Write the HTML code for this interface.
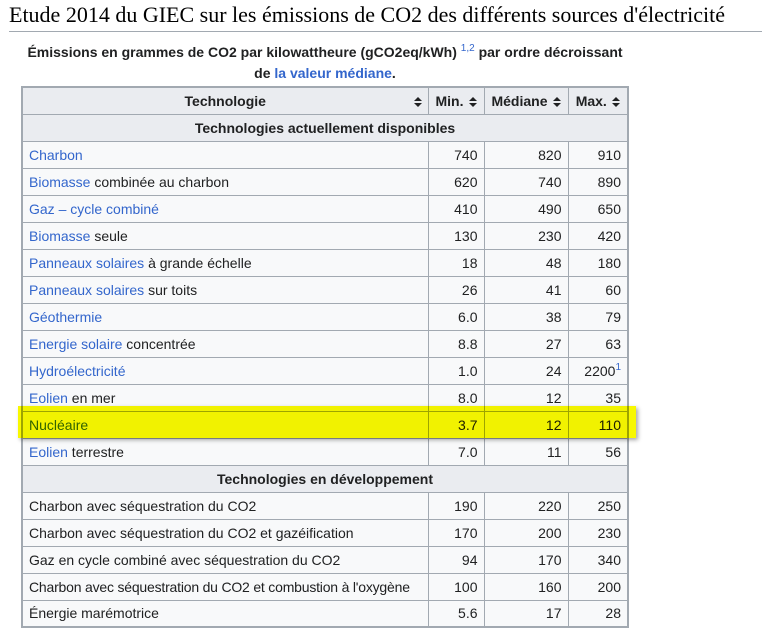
<!DOCTYPE html>
<html><head><meta charset="utf-8"><style>
body{margin:0;width:762px;height:635px;background:#fff;position:relative;overflow:hidden;font-family:"Liberation Sans",sans-serif;color:#202122}
h1{position:absolute;left:9px;top:0;margin:0;font:400 22px/30px "Liberation Serif",serif;color:#000;width:753px;border-bottom:1px solid #a2a9b1;height:31px;white-space:nowrap}
.cap{position:absolute;left:0;width:650px;text-align:center;font-weight:bold;font-size:14px;color:#202122;white-space:nowrap}
a,.l{color:#3366cc;text-decoration:none}
sup{font-size:10px;font-weight:normal;color:#3366cc;vertical-align:6px}
table{position:absolute;left:21px;top:86px;border-collapse:collapse;border:2px solid #a2a9b1;background:#f8f9fa;font-size:14px;table-layout:fixed;width:606px}
td,th{border:1px solid #a2a9b1;height:27px;padding:0 6px;box-sizing:border-box;white-space:nowrap;overflow:hidden}
th{background:#eaecf0;font-weight:bold}
td.n{text-align:right}
.ar{display:inline-block;vertical-align:middle;margin-left:5px}
.hl{position:absolute;left:18px;top:406px;width:618px;height:32px;background:#f8f800;mix-blend-mode:multiply;box-shadow:2px 2px 4px rgba(0,0,0,.35)}
</style></head><body>
<h1>Etude 2014 du GIEC sur les émissions de CO2 des différents sources d'électricité</h1>
<div class="cap" style="top:43px">Émissions en grammes de CO2 par kilowattheure (gCO2eq/kWh) <sup>1,2</sup> par ordre décroissant</div>
<div class="cap" style="top:65px">de <span class="l">la valeur médiane</span>.</div>
<table>
<colgroup><col style="width:406px"><col style="width:56px"><col style="width:84px"><col style="width:60px"></colgroup>
<tr><th style="position:relative">Technologie<svg class="ar" style="position:absolute;right:6px;top:9px" width="8" height="10" viewBox="0 0 8 10"><path d="M0 4L4 0L8 4ZM0 6L4 10L8 6Z" fill="#202122"/></svg></th><th>Min.<svg class="ar" width="8" height="10" viewBox="0 0 8 10"><path d="M0 4L4 0L8 4ZM0 6L4 10L8 6Z" fill="#202122"/></svg></th><th>Médiane<svg class="ar" width="8" height="10" viewBox="0 0 8 10"><path d="M0 4L4 0L8 4ZM0 6L4 10L8 6Z" fill="#202122"/></svg></th><th>Max.<svg class="ar" width="8" height="10" viewBox="0 0 8 10"><path d="M0 4L4 0L8 4ZM0 6L4 10L8 6Z" fill="#202122"/></svg></th></tr>
<tr><th colspan="4">Technologies actuellement disponibles</th></tr>
<tr><td><a>Charbon</a></td><td class="n">740</td><td class="n">820</td><td class="n">910</td></tr>
<tr><td><a>Biomasse</a> combinée au charbon</td><td class="n">620</td><td class="n">740</td><td class="n">890</td></tr>
<tr><td><a>Gaz – cycle combiné</a></td><td class="n">410</td><td class="n">490</td><td class="n">650</td></tr>
<tr><td><a>Biomasse</a> seule</td><td class="n">130</td><td class="n">230</td><td class="n">420</td></tr>
<tr><td><a>Panneaux solaires</a> à grande échelle</td><td class="n">18</td><td class="n">48</td><td class="n">180</td></tr>
<tr><td><a>Panneaux solaires</a> sur toits</td><td class="n">26</td><td class="n">41</td><td class="n">60</td></tr>
<tr><td><a>Géothermie</a></td><td class="n">6.0</td><td class="n">38</td><td class="n">79</td></tr>
<tr><td><a>Energie solaire</a> concentrée</td><td class="n">8.8</td><td class="n">27</td><td class="n">63</td></tr>
<tr><td><a>Hydroélectricité</a></td><td class="n">1.0</td><td class="n">24</td><td class="n">2200<sup>1</sup></td></tr>
<tr><td><a>Eolien</a> en mer</td><td class="n">8.0</td><td class="n">12</td><td class="n">35</td></tr>
<tr><td><a>Nucléaire</a></td><td class="n">3.7</td><td class="n">12</td><td class="n">110</td></tr>
<tr><td><a>Eolien</a> terrestre</td><td class="n">7.0</td><td class="n">11</td><td class="n">56</td></tr>
<tr><th colspan="4">Technologies en développement</th></tr>
<tr><td>Charbon avec séquestration du CO2</td><td class="n">190</td><td class="n">220</td><td class="n">250</td></tr>
<tr><td>Charbon avec séquestration du CO2 et gazéification</td><td class="n">170</td><td class="n">200</td><td class="n">230</td></tr>
<tr><td>Gaz en cycle combiné avec séquestration du CO2</td><td class="n">94</td><td class="n">170</td><td class="n">340</td></tr>
<tr><td style="letter-spacing:-0.2px">Charbon avec séquestration du CO2 et combustion à l'oxygène</td><td class="n">100</td><td class="n">160</td><td class="n">200</td></tr>
<tr><td>Énergie marémotrice</td><td class="n">5.6</td><td class="n">17</td><td class="n">28</td></tr>
</table>
<div class="hl"></div>
</body></html>
